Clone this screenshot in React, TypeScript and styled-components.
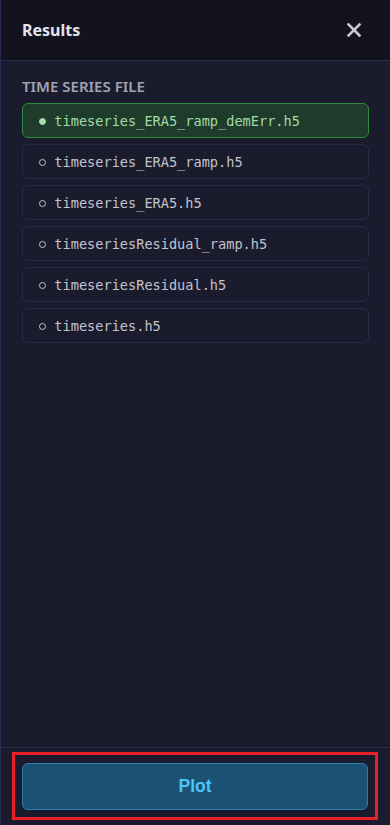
import React from "react";
import styled, { createGlobalStyle } from "styled-components";

const Global = createGlobalStyle`
  html, body { margin: 0; padding: 0; background: #1b1b2e; }
  * { box-sizing: border-box; }
`;

const Panel = styled.div`
  height: 825px;
  display: flex;
  flex-direction: column;
  background: #1b1b2e;
  border-left: 1px solid #2c2b50;
  font-family: "Noto Sans", "Open Sans", sans-serif;
`;

const Header = styled.header`
  height: 61px;
  flex: none;
  display: flex;
  align-items: center;
  justify-content: space-between;
  padding: 0 29px 0 21px;
  background: #13131f;
  border-bottom: 1px solid #2c2b50;
`;

const Title = styled.h2`
  margin: 0;
  font-size: 16px;
  font-weight: 700;
  color: #e4e4ea;
`;

const CloseButton = styled.button`
  border: 0;
  background: transparent;
  padding: 0;
  width: 14px;
  height: 14px;
  display: flex;
  align-items: center;
  justify-content: center;
  cursor: pointer;
`;

const Body = styled.main`
  flex: 1;
  padding: 16px 21px 0 21px;
  display: flex;
  flex-direction: column;
`;

const Label = styled.div`
  font-size: 15px;
  font-weight: 600;
  color: #a3a3b1;
  text-transform: uppercase;
  line-height: 19px;
  margin-bottom: 7px;
`;

const List = styled.ul`
  list-style: none;
  margin: 0;
  padding: 0;
  display: flex;
  flex-direction: column;
  gap: 6px;
`;

const Item = styled.li<{ $active?: boolean }>`
  height: 35px;
  display: flex;
  align-items: center;
  padding: 0 15px;
  border-radius: 6px;
  border: 1px solid ${(p) => (p.$active ? "#2f8a3b" : "#2a2948")};
  background: ${(p) => (p.$active ? "#1e3b2b" : "#1b1b2e")};
  color: ${(p) => (p.$active ? "#a3dca6" : "#c3c3cb")};
  font-family: "DejaVu Sans Mono", "Liberation Mono", monospace;
  font-size: 13.6px;
  white-space: pre;
`;

const Marker = styled.span`
  display: inline-flex;
  align-items: center;
  justify-content: flex-start;
  width: 2ch;
  flex: none;
`;

const Dot = styled.span<{ $filled?: boolean }>`
  width: 7px;
  height: 7px;
  margin-left: 1px;
  margin-top: 1px;
  border-radius: 50%;
  border: 1.4px solid currentColor;
  background: ${(p) => (p.$filled ? "currentColor" : "transparent")};
`;

const Footer = styled.footer`
  flex: none;
  border-top: 1px solid #2c2b50;
  padding: 4px 12px 5px 11px;
`;

const Highlight = styled.div`
  border: 3px solid #e8202a;
  padding: 8px 7px 7px 7px;
`;

const PlotButton = styled.button`
  width: 100%;
  height: 47px;
  border-radius: 6px;
  border: 1px solid #2d7db3;
  background: #1b5274;
  color: #4fc3f7;
  font-family: "Liberation Sans", Arial, sans-serif;
  font-size: 17.5px;
  font-weight: 700;
  cursor: pointer;
`;

const files = [
  "timeseries_ERA5_ramp_demErr.h5",
  "timeseries_ERA5_ramp.h5",
  "timeseries_ERA5.h5",
  "timeseriesResidual_ramp.h5",
  "timeseriesResidual.h5",
  "timeseries.h5",
];

export default function App() {
  const selected = 0;
  return (
    <>
      <Global />
      <Panel>
        <Header>
          <Title>Results</Title>
          <CloseButton aria-label="Close">
            <svg width="14" height="14" viewBox="0 0 14 14">
              <path d="M1.5 1.5 L12.5 12.5 M12.5 1.5 L1.5 12.5" stroke="#c9c9d1" strokeWidth="2.6" strokeLinecap="square" />
            </svg>
          </CloseButton>
        </Header>
        <Body>
          <Label>Time series file</Label>
          <List>
            {files.map((f, i) => (
              <Item key={f} $active={i === selected}>
                <Marker>
                  <Dot $filled={i === selected} />
                </Marker>
                {f}
              </Item>
            ))}
          </List>
        </Body>
        <Footer>
          <Highlight>
            <PlotButton>Plot</PlotButton>
          </Highlight>
        </Footer>
      </Panel>
    </>
  );
}
